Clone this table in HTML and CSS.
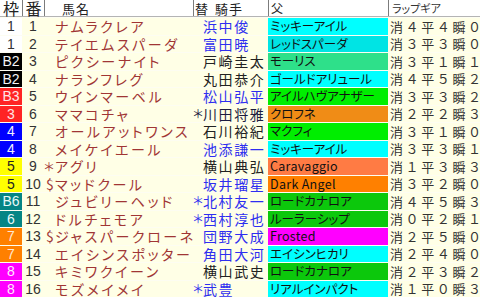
FILE: index.html
```html
<!DOCTYPE html>
<html lang="ja">
<head>
<meta charset="utf-8">
<title>出馬表</title>
<link rel="stylesheet" href="styles.css">
</head>
<body>
<div class="sheet">
  <div class="row head">
    <div class="c h-waku">枠</div>
    <div class="c h-ban">番</div>
    <div class="c h-name">馬名</div>
    <div class="c h-jockey">替 騎手</div>
    <div class="c h-sire">父</div>
    <div class="c h-lap">ラップギア</div>
  </div>

  <div class="row">
    <div class="c waku f1">1</div><div class="c ban">1</div>
    <div class="c name"><span class="mk"></span>ナムラクレア</div>
    <div class="c kae"></div><div class="c jockey blue">浜中俊</div>
    <div class="c sire cyan">ミッキーアイル</div><div class="c lap">消４平４瞬０</div>
  </div>
  <div class="row">
    <div class="c waku f1">1</div><div class="c ban">2</div>
    <div class="c name"><span class="mk"></span>テイエムスパーダ</div>
    <div class="c kae"></div><div class="c jockey blue">富田暁</div>
    <div class="c sire cyan2">レッドスパーダ</div><div class="c lap">消３平３瞬０</div>
  </div>
  <div class="row">
    <div class="c waku f2">B2</div><div class="c ban">3</div>
    <div class="c name"><span class="mk"></span>ピクシーナイト</div>
    <div class="c kae"></div><div class="c jockey">戸崎圭太</div>
    <div class="c sire spring">モーリス</div><div class="c lap">消３平１瞬１</div>
  </div>
  <div class="row">
    <div class="c waku f2">B2</div><div class="c ban">4</div>
    <div class="c name"><span class="mk"></span>ナランフレグ</div>
    <div class="c kae"></div><div class="c jockey">丸田恭介</div>
    <div class="c sire cyan">ゴールドアリュール</div><div class="c lap">消４平５瞬２</div>
  </div>
  <div class="row">
    <div class="c waku f3">B3</div><div class="c ban">5</div>
    <div class="c name"><span class="mk"></span>ウインマーベル</div>
    <div class="c kae"></div><div class="c jockey blue">松山弘平</div>
    <div class="c sire green">アイルハヴアナザー</div><div class="c lap">消３平３瞬２</div>
  </div>
  <div class="row">
    <div class="c waku f3">3</div><div class="c ban">6</div>
    <div class="c name"><span class="mk"></span>ママコチャ</div>
    <div class="c kae dark"><span class="ast">＊</span></div><div class="c jockey dark">川田将雅</div>
    <div class="c sire orange">クロフネ</div><div class="c lap">消２平２瞬３</div>
  </div>
  <div class="row">
    <div class="c waku f4">4</div><div class="c ban">7</div>
    <div class="c name"><span class="mk"></span>オールアットワンス</div>
    <div class="c kae"></div><div class="c jockey">石川裕紀</div>
    <div class="c sire green">マクフィ</div><div class="c lap">消３平１瞬０</div>
  </div>
  <div class="row">
    <div class="c waku f4">4</div><div class="c ban">8</div>
    <div class="c name"><span class="mk"></span>メイケイエール</div>
    <div class="c kae"></div><div class="c jockey blue">池添謙一</div>
    <div class="c sire cyan">ミッキーアイル</div><div class="c lap">消３平３瞬１</div>
  </div>
  <div class="row">
    <div class="c waku f5">5</div><div class="c ban">9</div>
    <div class="c name"><span class="mk"><span class="ast">＊</span></span>アグリ</div>
    <div class="c kae"></div><div class="c jockey">横山典弘</div>
    <div class="c sire coral latin">Caravaggio</div><div class="c lap">消１平３瞬３</div>
  </div>
  <div class="row">
    <div class="c waku f5">5</div><div class="c ban">10</div>
    <div class="c name"><span class="mk">$</span>マッドクール</div>
    <div class="c kae"></div><div class="c jockey blue">坂井瑠星</div>
    <div class="c sire orange2 latin">Dark Angel</div><div class="c lap">消３平２瞬０</div>
  </div>
  <div class="row">
    <div class="c waku f6">B6</div><div class="c ban">11</div>
    <div class="c name"><span class="mk"></span>ジュビリーヘッド</div>
    <div class="c kae blue"><span class="ast">＊</span></div><div class="c jockey blue">北村友一</div>
    <div class="c sire green2">ロードカナロア</div><div class="c lap">消４平５瞬３</div>
  </div>
  <div class="row">
    <div class="c waku f6">6</div><div class="c ban">12</div>
    <div class="c name"><span class="mk"></span>ドルチェモア</div>
    <div class="c kae blue"><span class="ast">＊</span></div><div class="c jockey blue">西村淳也</div>
    <div class="c sire green2">ルーラーシップ</div><div class="c lap">消０平２瞬１</div>
  </div>
  <div class="row">
    <div class="c waku f7">7</div><div class="c ban">13</div>
    <div class="c name"><span class="mk">$</span>ジャスパークローネ</div>
    <div class="c kae"></div><div class="c jockey blue">団野大成</div>
    <div class="c sire magenta latin">Frosted</div><div class="c lap">消２平５瞬０</div>
  </div>
  <div class="row">
    <div class="c waku f7">7</div><div class="c ban">14</div>
    <div class="c name"><span class="mk"></span>エイシンスポッター</div>
    <div class="c kae"></div><div class="c jockey blue">角田大河</div>
    <div class="c sire cyan">エイシンヒカリ</div><div class="c lap">消２平４瞬０</div>
  </div>
  <div class="row">
    <div class="c waku f8">8</div><div class="c ban">15</div>
    <div class="c name"><span class="mk"></span>キミワクイーン</div>
    <div class="c kae"></div><div class="c jockey">横山武史</div>
    <div class="c sire green2">ロードカナロア</div><div class="c lap">消２平３瞬２</div>
  </div>
  <div class="row">
    <div class="c waku f8">8</div><div class="c ban">16</div>
    <div class="c name"><span class="mk"></span>モズメイメイ</div>
    <div class="c kae blue"><span class="ast">＊</span></div><div class="c jockey blue">武豊</div>
    <div class="c sire cyan">リアルインパクト</div><div class="c lap">消１平０瞬３</div>
  </div>
</div>
</body>
</html>
```

FILE: styles.css
```css
html, body {
  margin: 0;
  padding: 0;
  background: #ffffff;
}

body {
  font-family: "Noto Sans CJK JP", sans-serif;
  color: #222;
}

.sheet {
  width: 480px;
  height: 297px;
  display: grid;
  grid-template-rows: 17px repeat(16, 1fr);
  row-gap: 1px;
  background: #fdfdf2;
  overflow: hidden;
}

.row {
  display: grid;
  grid-template-columns: 22px 22px 150px 9px 65px 120px 92px;
  background: #ffffe6;
  min-height: 0;
}

.head {
  grid-template-columns: 22px 22px 149px 75px 120px 92px;
  background: #ffffff;
  border-bottom: 1px solid #b4b4b4;
}

.c {
  display: flex;
  align-items: center;
  white-space: nowrap;
  line-height: 1;
  min-width: 0;
}

/* header */
.h-waku, .h-ban {
  justify-content: center;
  font-size: 16px;
  color: #222;
}
.h-ban, .h-name, .h-jockey, .h-sire, .h-lap {
  border-left: 1px solid #7c7c7c;
}
.h-name {
  font-size: 13px;
  padding-left: 17px;
  letter-spacing: 1px;
}
.h-jockey {
  font-size: 13px;
  padding-left: 1px;
  letter-spacing: 1px;
  word-spacing: 2px;
}
.h-sire {
  font-size: 12px;
  padding-left: 2px;
}
.h-lap {
  font-size: 11px;
  padding-left: 3px;
  font-feature-settings: "palt";
  color: #333;
}

/* frame column */
.waku {
  justify-content: center;
  font-family: "Liberation Sans", sans-serif;
  font-size: 14px;
  color: #ffffff;
}
.f1 { background: #ffffff; color: #333; }
.f2 { background: #000000; color: #f4f4f4; }
.f3 { background: #ff2424; color: #ffe4e4; }
.f4 { background: #0000ff; color: #f0f0ff; }
.f5 { background: #ffff00; color: #222; }
.f6 { background: #058585; color: #e8f8f8; }
.f7 { background: #ff8000; color: #ffe8d4; }
.f8 { background: #ff00ff; color: #ffe8ff; }

/* number */
.ban {
  justify-content: center;
  font-family: "Liberation Sans", sans-serif;
  font-size: 14px;
  color: #333;
}

/* horse name */
.name {
  font-size: 14px;
  color: #a03535;
  letter-spacing: 2.6px;
  font-feature-settings: "palt";
}
.mk {
  display: inline-block;
  width: 11px;
  padding-left: 2px;
  box-sizing: border-box;
  letter-spacing: 0;
  flex: none;
}
.ast {
  display: inline-block;
  font-size: 12px;
  letter-spacing: 0;
  margin-left: -2px;
  width: 9px;
}

/* jockey */
.kae {
  font-size: 14px;
  color: #222;
}
.jockey {
  font-size: 14px;
  letter-spacing: 1.6px;
  color: #222;
}
.blue { color: #2e2ef0; }
.dark { color: #1c1c40; }

/* sire */
.sire {
  font-size: 12.5px;
  padding-left: 2px;
  color: #111;
  font-feature-settings: "palt";
  overflow: hidden;
}
.latin { letter-spacing: 0.3px; }
.cyan { background: #00ffff; }
.cyan2 { background: #00e4e4; }
.spring { background: #2ee08a; }
.green { background: #00ee00; }
.green2 { background: #0cc80c; }
.orange { background: #f08c16; }
.orange2 { background: #ff8000; }
.coral { background: #ff7b44; }
.magenta { background: #ff00ff; }

/* lap gear */
.lap {
  font-size: 13px;
  padding-left: 2px;
  letter-spacing: 2.6px;
  color: #333;
}
```
